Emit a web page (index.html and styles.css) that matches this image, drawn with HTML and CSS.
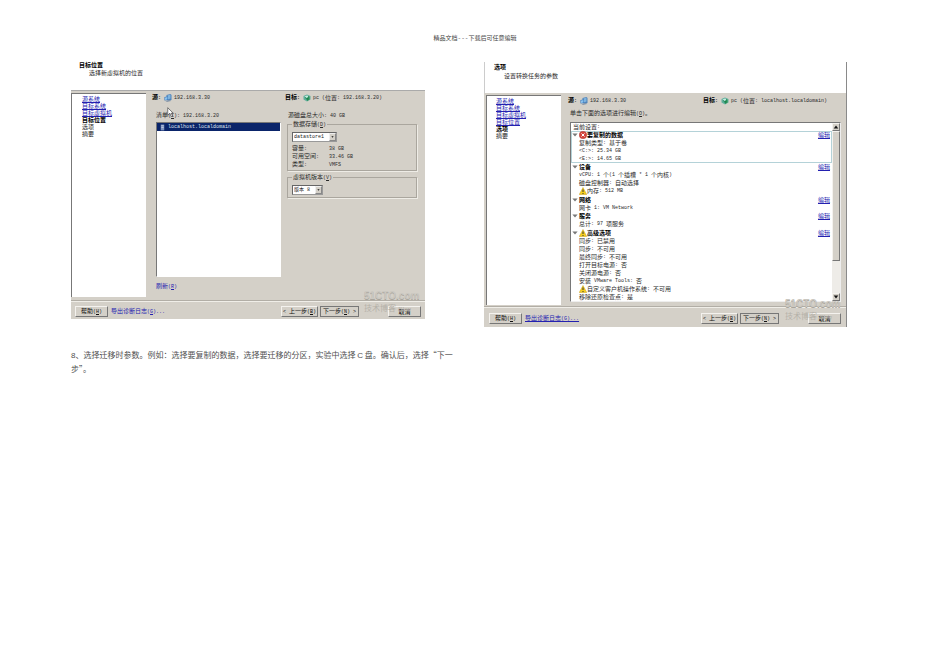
FILE: index.html
```html
<!DOCTYPE html>
<html lang="zh-CN">
<head>
<meta charset="utf-8">
<title>精品文档</title>
<link rel="stylesheet" href="styles.css">
</head>
<body>
<svg class="defs" aria-hidden="true">
  <symbol id="host" viewBox="0 0 16 16">
    <path d="M5 2 13 0 15 2V12L10 14 5 12Z" fill="#4f83ba"/>
    <path d="M7 3 13 1V9L7 11Z" fill="#7fb4de"/>
    <path d="M1 6 8 5V12L1 13Z" fill="#2f6fb5"/>
    <path d="M2 7 7 6V11L2 12Z" fill="#8cc3ee"/>
    <path d="M3 14 11 12 14 14 6 16Z" fill="#8796a8"/>
  </symbol>
  <symbol id="target" viewBox="0 0 16 16">
    <path d="M1 4 8 1 15 4V11L8 15 1 11Z" fill="#5fae9c"/>
    <path d="M3 5 8 3 13 5 8 8Z" fill="#c7ecdf"/>
    <path d="M8 8 13 6V11L8 14Z" fill="#2b8f55"/>
    <path d="M5 7 8 11 12 4" fill="none" stroke="#18854a" stroke-width="2"/>
  </symbol>
  <symbol id="warn" viewBox="0 0 16 16">
    <path d="M8 1 15.500 15H.5Z" fill="#f6cf1c" stroke="#c79d1c" stroke-linejoin="round"/>
    <path d="M8 5V10M8 12V14" stroke="#333" stroke-width="2"/>
  </symbol>
  <symbol id="error" viewBox="0 0 16 16">
    <circle cx="8" cy="8" r="7.500" fill="#d4443c" stroke="#b5443f"/>
    <path d="M5 5 11 11M11 5 5 11" stroke="#fff" stroke-width="2"/>
  </symbol>
  <symbol id="open" viewBox="0 0 16 16"><path d="M1 4H15L8 12Z" fill="#777"/></symbol>
  <symbol id="up" viewBox="0 0 8 8"><path d="M1 6H7L4 2Z" fill="#111"/></symbol>
  <symbol id="down" viewBox="0 0 8 8"><path d="M1 2H7L4 6Z" fill="#111"/></symbol>
</svg>

<header class="doc-head">精品文档---下载后可任意编辑</header>

<main class="figures">
  <section class="wizard first">
    <div class="head">
      <h2>目标位置</h2>
      <p>选择新虚拟机的位置</p>
    </div>
    <div class="body">
      <nav class="steps">
        <a href="#">源系统</a>
        <a href="#">目标系统</a>
        <a href="#">目标虚拟机</a>
        <b>目标位置</b>
        <span>选项</span>
        <span>摘要</span>
      </nav>
      <div class="content">
        <div class="route">
          <div><b>源<i>:</i></b><svg class="ico"><use href="#host"/></svg><i>192.168.3.30</i></div>
          <div><b>目标<i>:</i></b><svg class="ico"><use href="#target"/></svg><i>pc (</i>位置<i>: 192.168.3.20)</i></div>
        </div>
        <div class="split">
          <div class="inventory">
            <p>清单<i>(<u>I</u>): 192.168.3.20</i>
              <svg class="cursor" viewBox="0 0 10 16"><path d="M1 1V12L4 9 6 14 8 13 6 9H9Z" fill="#fff" stroke="#444"/></svg></p>
            <ul class="list">
              <li><svg class="server" viewBox="0 0 8 12"><path d="M1 1H7V11H1Z" fill="#7f93bd"/><path d="M2 3H6M2 6H6" stroke="#dfe6f5"/></svg><i>localhost.localdomain</i></li>
            </ul>
            <a class="refresh" href="#">刷新<i>(<u>R</u>)</i></a>
          </div>
          <div class="store">
            <p>源磁盘总大小<i>: 40 GB</i></p>
            <fieldset>
              <legend><label for="ds">数据存储<i>(<u>D</u>)</i></label></legend>
              <span class="pick wide"><select id="ds"><option>datastore1</option></select><svg><use href="#down"/></svg></span>
              <dl>
                <dt>容量<i>:</i></dt><dd><i>38 GB</i></dd>
                <dt>可用空间<i>:</i></dt><dd><i>33.46 GB</i></dd>
                <dt>类型<i>:</i></dt><dd><i>VMFS</i></dd>
              </dl>
            </fieldset>
            <fieldset class="version">
              <legend><label for="ver">虚拟机版本<i>(<u>V</u>)</i></label></legend>
              <span class="pick"><select id="ver"><option>版本 8</option></select><svg><use href="#down"/></svg></span>
            </fieldset>
          </div>
        </div>
      </div>
    </div>
    <div class="foot">
      <button>帮助<i>(<u>H</u>)</i></button>
      <a href="#">导出诊断日志<i>(<u>G</u>)...</i></a>
      <button class="back"><i>&lt; </i>上一步<i>(<u>B</u>)</i></button>
      <button class="next">下一步<i>(<u>N</u>) &gt;</i></button>
      <button class="cancel">取消</button>
    </div>
    <div class="mark"><strong>51CTO.com</strong><span>技术博客 <em>Blog</em></span></div>
  </section>

  <section class="wizard second">
    <div class="head">
      <h2>选项</h2>
      <p>设置转换任务的参数</p>
    </div>
    <div class="body">
      <nav class="steps">
        <a href="#">源系统</a>
        <a href="#">目标系统</a>
        <a href="#">目标虚拟机</a>
        <a href="#">目标位置</a>
        <b>选项</b>
        <span>摘要</span>
      </nav>
      <div class="content">
        <div class="route">
          <div><b>源<i>:</i></b><svg class="ico"><use href="#host"/></svg><i>192.168.3.30</i></div>
          <div><b>目标<i>:</i></b><svg class="ico"><use href="#target"/></svg><i>pc (</i>位置<i>: localhost.localdomain)</i></div>
        </div>
        <p class="hint">单击下面的选项进行编辑<i>(<u>O</u>)</i>。</p>
        <div class="settings">
          <div class="groups">
            <p class="now">当前设置<i>:</i></p>
            <section class="active">
              <h3><svg><use href="#open"/></svg><svg class="sign"><use href="#error"/></svg>要复制的数据<a href="#">编辑</a></h3>
              <p>复制类型<i>: </i>基于卷</p>
              <p><i>&lt;C:&gt;: 25.34 GB</i></p>
              <p><i>&lt;E:&gt;: 14.65 GB</i></p>
            </section>
            <section class="spaced">
              <h3><svg><use href="#open"/></svg>设备<a href="#">编辑</a></h3>
              <p><i>vCPU: 1 </i>个<i>(1 </i>个插槽<i> * 1 </i>个内核<i>)</i></p>
              <p>磁盘控制器<i>: </i>自动选择</p>
              <p><svg class="sign"><use href="#warn"/></svg>内存<i>: 512 MB</i></p>
            </section>
            <section>
              <h3><svg><use href="#open"/></svg>网络<a href="#">编辑</a></h3>
              <p>网卡<i> 1: VM Network</i></p>
            </section>
            <section class="spaced">
              <h3><svg><use href="#open"/></svg>服务<a href="#">编辑</a></h3>
              <p>总计<i>: 97 </i>项服务</p>
            </section>
            <section>
              <h3><svg><use href="#open"/></svg><svg class="sign"><use href="#warn"/></svg>高级选项<a href="#">编辑</a></h3>
              <p>同步<i>: </i>已禁用</p>
              <p>同步<i>: </i>不可用</p>
              <p>最终同步<i>: </i>不可用</p>
              <p>打开目标电源<i>: </i>否</p>
              <p>关闭源电源<i>: </i>否</p>
              <p>安装<i> VMware Tools: </i>否</p>
              <p><svg class="sign"><use href="#warn"/></svg>自定义客户机操作系统<i>: </i>不可用</p>
              <p>移除还原检查点<i>: </i>是</p>
            </section>
          </div>
          <div class="scroll">
            <span class="cap"><svg><use href="#up"/></svg></span>
            <span class="thumb"></span>
            <span class="cap end"><svg><use href="#down"/></svg></span>
          </div>
        </div>
      </div>
    </div>
    <div class="foot">
      <button>帮助<i>(<u>H</u>)</i></button>
      <a class="lined" href="#">导出诊断日志<i>(<u>G</u>)...</i></a>
      <button class="back"><i>&lt; </i>上一步<i>(<u>B</u>)</i></button>
      <button class="next">下一步<i>(<u>N</u>) &gt;</i></button>
      <button class="cancel">取消</button>
    </div>
    <div class="mark"><strong>51CTO.com</strong><span>技术博客 <em>Blog</em></span></div>
  </section>
</main>

<p class="note"><span>8</span>、选择迁移时参数。例如：选择要复制的数据，选择要迁移的分区，实验中选择 <span>C</span> 盘。确认后，选择“下一<br>步”。</p>
</body>
</html>
```
FILE: styles.css
```css
* { box-sizing: border-box; margin: 0; padding: 0; }

body {
  background: #fff;
  color: #2a2a2a;
  font: 6px/8px "Noto Sans CJK SC", sans-serif;
  padding: 34px 103px 0 71px;
}

.defs { display: none; }
i { font: 5px/8px "Liberation Mono", monospace; white-space: pre; }
b i { font-weight: bold; }
a { color: #2320b0; }
ul { list-style: none; }

.doc-head {
  color: #444;
  font-family: "Liberation Mono", "Noto Sans CJK SC", monospace;
  line-height: 10px;
  text-align: center;
  margin: 0 -32px 0 0;
}

.figures {
  display: grid;
  grid-template-columns: 354fr 363fr;
  column-gap: 59px;
  align-items: start;
  margin-top: 17px;
}

.wizard { position: relative; background: #d4d0c8; }
.second { border-right: 1px solid #8a8a8a; margin-top: 1px; }
.head { background: #fff; height: 30px; padding-left: 8px; border-bottom: 1px solid #aaa; }
.second .head {
  height: 32px;
  padding: 1px 0 0 9px;
  border-left: 1px solid #ccc;
  border-bottom-color: #d4d0c8;
}
.head h2 { font-size: 6px; line-height: 8px; color: #000; }
.first .head h2 { line-height: 7px; }
.head p { padding-left: 10px; line-height: 9px; }

.body { display: flex; padding: 2px 8px 3px 0; border-bottom: 1px solid #b2aea6; box-shadow: 0 1px #f0eee8; }
.second .body { padding: 1px 5px 1px 2px; }
.steps {
  display: flex;
  flex-direction: column;
  flex: 0 0 75px;
  min-height: 204px;
  background: #fff;
  border-left: 1px solid #777;
  border-top: 1px solid #777;
  padding: 1px 0 0 10px;
}
.second .steps { min-height: 210px; padding-left: 9px; }
.steps > * { line-height: 7px; }
.steps b { color: #000; }

.content { flex: 1; min-width: 0; padding-left: 6px; }
.second .content { padding-left: 7px; }
.route { display: grid; grid-template-columns: 133fr 132fr; }
.second .route { grid-template-columns: 135fr 138fr; padding-top: 1px; }
.route div { display: flex; align-items: center; line-height: 8px; white-space: nowrap; }
.route b { color: #000; }
.ico { width: 8px; height: 8px; margin: 0 2px 0 3px; }

.split { display: grid; grid-template-columns: 125fr 130fr; column-gap: 6px; padding: 9px 0 0 4px; }
.inventory > p { position: relative; line-height: 8px; }
.cursor { position: absolute; left: 11px; top: -4px; width: 7px; height: 11px; }
.list {
  height: 155px;
  margin: 2px 0 5px;
  background: #fff;
  border: 1px solid #fff;
  border-top-color: #777;
  border-left-color: #777;
}
.list li { display: flex; align-items: center; height: 8px; background: #0a246a; color: #dfe3ee; }
.server { width: 5px; height: 7px; margin: 0 3px; }
.refresh { text-decoration: none; }

.store > p { padding-left: 1px; line-height: 8px; }
.store fieldset { border: 1px solid #aaa69e; padding: 0 4px 2px; box-shadow: 1px 1px #eeece6; min-width: 0; }
.store .version { margin-top: 2px; }
.store legend { padding: 0 1px; line-height: 8px; }
.pick {
  position: relative;
  display: block;
  width: 31px;
  height: 10px;
  margin-top: 3px;
  background: #fff;
  border: 1px solid #999;
  border-top-color: #666;
  border-left-color: #666;
}
.wide { width: 45px; }
.pick select {
  display: block;
  width: 100%;
  height: 8px;
  appearance: none;
  border: 0;
  background: transparent;
  color: #222;
  font: 5px/8px "Liberation Mono", "Noto Sans CJK SC", monospace;
  padding-left: 1px;
}
.pick svg {
  position: absolute;
  right: 0;
  top: 0;
  width: 7px;
  height: 8px;
  padding: 1px;
  background: #d4d0c8;
  border: 1px solid #888;
  border-top-color: #eee;
  border-left-color: #eee;
  pointer-events: none;
}
.store dl { display: grid; grid-template-columns: 37px 1fr; grid-auto-rows: 8px; padding-top: 2px; }
.store dt, .store dd { line-height: 8px; }

.foot { display: flex; align-items: center; padding: 5px 4px 2px; }
.second .foot { padding: 6px 5px 3px; }
.foot button {
  width: 33px;
  height: 11px;
  background: #d4d0c8;
  border: 1px solid #777;
  border-top-color: #f4f2ee;
  border-left-color: #f4f2ee;
  color: #111;
  font: 6px/8px "Noto Sans CJK SC", sans-serif;
  white-space: nowrap;
}
.foot a { margin-left: 3px; text-decoration: none; }
.foot .lined { text-decoration: underline; }
.foot .back { width: 37px; margin-left: auto; }
.foot .next { width: 39px; margin-left: 2px; border-color: #777; }
.foot .cancel { margin-left: 29px; }

.mark {
  position: absolute;
  right: 5px;
  bottom: 4px;
  width: 56px;
  color: #b4b0a8;
  pointer-events: none;
  white-space: nowrap;
}
.mark strong { display: block; font: bold 10px/13px "Liberation Sans", sans-serif; color: #cbc8c1; text-shadow: 0 1px #a9a59d; }
.mark span { display: block; font-size: 8px; line-height: 12px; }
.mark em { font: italic 7px/12px "Liberation Serif", serif; }

.hint { line-height: 8px; padding: 4px 0 4px 2px; }
.settings { display: flex; margin-left: 2px; background: #fff; border: 1px solid #777; border-right-color: #eee; border-bottom-color: #eee; }
.groups { flex: 1; min-width: 0; }
.groups p { line-height: 8px; height: 8px; padding-left: 8px; display: flex; align-items: center; white-space: pre; }
.groups .now { padding-left: 2px; }
.groups h3 { display: flex; align-items: center; height: 8px; font-size: 6px; line-height: 8px; color: #000; padding: 0 2px 0 1px; }
.groups h3 a { margin-left: auto; font-weight: normal; }
.groups svg { width: 6px; height: 6px; margin-right: 1px; flex: none; }
.groups .sign { width: 8px; height: 8px; margin-right: 0; }
.active { box-shadow: inset 0 0 0 1px #b4d2d8; }
.spaced { padding-bottom: 1px; }

.scroll { display: flex; flex-direction: column; width: 8px; background: #eeece8; }
.cap, .thumb { display: block; background: #d4d0c8; border: 1px solid #777; border-top-color: #f4f2ee; border-left-color: #f4f2ee; }
.cap { height: 8px; }
.cap svg { display: block; width: 6px; height: 6px; }
.thumb { flex: 0 0 130px; }
.end { margin-top: auto; }

.note { margin-top: 21px; color: #505050; font-size: 8px; line-height: 13px; }
.note span { font-family: "Liberation Sans", sans-serif; }
```
